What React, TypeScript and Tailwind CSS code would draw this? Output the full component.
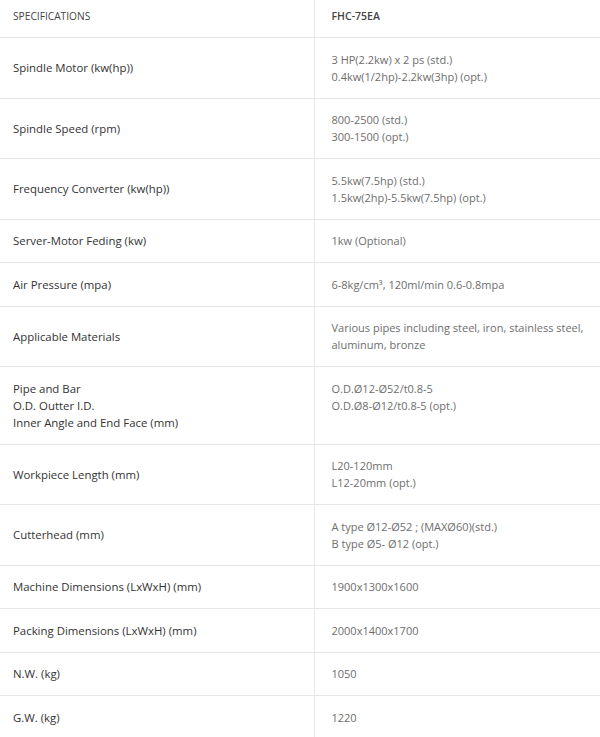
import React from "react";

type Row = { label: string[]; value: string[] };

const rows: Row[] = [
  { label: ["Spindle Motor (kw(hp))"], value: ["3 HP(2.2kw) x 2 ps (std.)", "0.4kw(1/2hp)-2.2kw(3hp) (opt.)"] },
  { label: ["Spindle Speed (rpm)"], value: ["800-2500 (std.)", "300-1500 (opt.)"] },
  { label: ["Frequency Converter (kw(hp))"], value: ["5.5kw(7.5hp) (std.)", "1.5kw(2hp)-5.5kw(7.5hp) (opt.)"] },
  { label: ["Server-Motor Feding (kw)"], value: ["1kw (Optional)"] },
  { label: ["Air Pressure (mpa)"], value: ["6-8kg/cm³, 120ml/min 0.6-0.8mpa"] },
  { label: ["Applicable Materials"], value: ["Various pipes including steel, iron, stainless steel,", "aluminum, bronze"] },
  {
    label: ["Pipe and Bar", "O.D. Outter I.D.", "Inner Angle and End Face (mm)"],
    value: ["O.D.Ø12-Ø52/t0.8-5", "O.D.Ø8-Ø12/t0.8-5 (opt.)", "\u00a0"],
  },
  { label: ["Workpiece Length (mm)"], value: ["L20-120mm", "L12-20mm (opt.)"] },
  { label: ["Cutterhead (mm)"], value: ["A type Ø12-Ø52 ; (MAXØ60)(std.)", "B type Ø5- Ø12 (opt.)"] },
  { label: ["Machine Dimensions (LxWxH) (mm)"], value: ["1900x1300x1600"] },
  { label: ["Packing Dimensions (LxWxH) (mm)"], value: ["2000x1400x1700"] },
  { label: ["N.W. (kg)"], value: ["1050"] },
  { label: ["G.W. (kg)"], value: ["1220"] },
];

export default function App() {
  return (
    <div className="w-[600px] h-[737px] overflow-hidden bg-white font-['Open_Sans',sans-serif]">
      <table className="w-full border-collapse">
        <thead>
          <tr className="border-b border-[#e6e6e6]">
            <th className="w-[314px] border-r border-[#e6e6e6] pl-[13px] pt-[8px] pb-[12px] text-left text-[10.2px] leading-[17px] font-medium uppercase text-[#444]">
              Specifications
            </th>
            <th className="pl-[17px] pt-[8px] pb-[12px] text-left text-[10.5px] leading-[17px] font-semibold text-[#444]">
              FHC-75EA
            </th>
          </tr>
        </thead>
        <tbody>
          {rows.map((r, i) => (
            <tr key={i} className="border-b border-[#e6e6e6]">
              <td className="w-[314px] border-r border-[#e6e6e6] pl-[13px] py-[12.75px] align-middle text-[11.4px] leading-[17px] font-medium text-[#333]">
                {r.label.map((l, j) => (
                  <div key={j}>{l}</div>
                ))}
              </td>
              <td className="pl-[17px] pr-2 py-[12.75px] align-middle text-[11px] leading-[17px] text-[#6e6e6e]">
                {r.value.map((v, j) => (
                  <div key={j} className="whitespace-nowrap">{v}</div>
                ))}
              </td>
            </tr>
          ))}
        </tbody>
      </table>
    </div>
  );
}
